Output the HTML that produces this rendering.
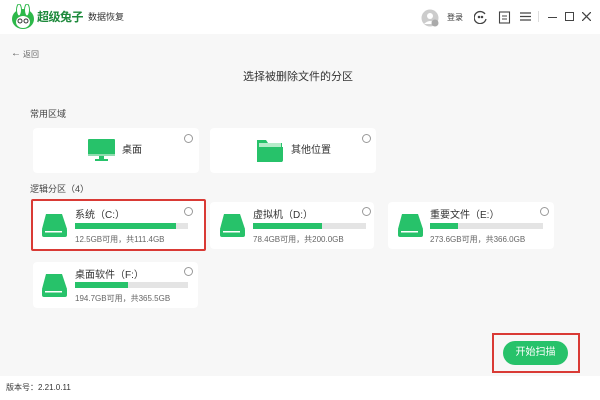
<!DOCTYPE html>
<html><head><meta charset="utf-8"><style>
*{margin:0;padding:0;box-sizing:border-box}
body{width:600px;height:400px;overflow:hidden;background:#fff;font-family:"Liberation Sans","Noto Sans CJK SC",sans-serif;color:#333;position:relative}
.a{position:absolute}
.main{left:0;top:34px;width:600px;height:342px;background:#f7f7f7}
.card{position:absolute;background:#fff;border-radius:4px}
.radio{position:absolute;width:9px;height:9px;border:1px solid #999;border-radius:50%}
.t{position:absolute;font-size:10px;white-space:nowrap;line-height:1}
.bar{position:absolute;height:6px;background:#e4e4e4}
.bar i{display:block;height:100%;background:#27c26a}
.s{position:absolute;font-size:8px;color:#666;white-space:nowrap;line-height:1}
</style></head><body>
<svg class="a" style="left:11px;top:4px" width="24" height="26" viewBox="0 0 24 26">
<ellipse cx="12" cy="15" rx="11" ry="10" fill="#2db84a"/>
<ellipse cx="8" cy="6" rx="2.5" ry="6" fill="#fff" stroke="#2db84a"/>
<ellipse cx="16" cy="6" rx="2.5" ry="6" fill="#fff" stroke="#2db84a"/>
<ellipse cx="12" cy="18" rx="7" ry="6" fill="#fff"/>
<circle cx="9" cy="17" r="2" fill="none" stroke="#333"/><circle cx="15" cy="17" r="2" fill="none" stroke="#333"/>
</svg>
<div class="t" style="left:37px;top:11px;font-size:12px;font-weight:bold;color:#1e8a3c;letter-spacing:-0.5px">超级兔子</div>
<div class="t" style="left:88px;top:13px;font-size:9px;color:#333">数据恢复</div>
<svg class="a" style="left:421px;top:9px" width="18" height="18"><circle cx="9" cy="9" r="8.5" fill="#ccc"/><circle cx="9" cy="7" r="3" fill="#fff"/><path d="M3 15 Q9 9 15 15" fill="#fff"/><circle cx="14" cy="14" r="3.5" fill="#aaa"/></svg>
<div class="t" style="left:447px;top:14px;font-size:8px">登录</div>
<svg class="a" style="left:474px;top:10px" width="14" height="14" fill="none" stroke="#444" stroke-width="1.3"><path d="M11 4 A6 6 0 1 0 12 9"/><circle cx="5" cy="7" r=".6" fill="#444"/><circle cx="8" cy="7" r=".6" fill="#444"/></svg>
<svg class="a" style="left:498px;top:10px" width="13" height="14" fill="none" stroke="#444" stroke-width="1.1"><rect x="1.5" y="2" width="10" height="11"/><path d="M4 6h5M4 9h5"/></svg>
<svg class="a" style="left:520px;top:11px" width="11" height="11" stroke="#444" stroke-width="1.2"><path d="M0 2h11M0 5.5h11M0 9h11"/></svg>
<div class="a" style="left:538px;top:11px;width:1px;height:11px;background:#ddd"></div>
<div class="a" style="left:548px;top:17px;width:9px;height:1.3px;background:#444"></div>
<div class="a" style="left:565px;top:12px;width:9px;height:9px;border:1.3px solid #444"></div>
<svg class="a" style="left:582px;top:12px" width="9" height="9" stroke="#444" stroke-width="1.3"><path d="M0 0L9 9M9 0L0 9"/></svg>
<div class="a main"></div>
<div class="t" style="left:11px;top:49px;font-size:10px;color:#555">←</div>
<div class="t" style="left:23px;top:51px;font-size:8px;color:#666">返回</div>
<div class="t" style="left:243px;top:72px;font-size:11px">选择被删除文件的分区</div>
<div class="t" style="left:30px;top:110px;font-size:9px;color:#444">常用区域</div>
<div class="card" style="left:33px;top:128px;width:166px;height:45px"></div>
<div class="radio" style="left:184px;top:134px"></div>
<svg class="a" style="left:88px;top:139px" width="28" height="24"><rect x="0" y="0" width="27" height="17" rx="1" fill="#27c26a"/><rect x="0" y="15" width="27" height="2" fill="#8fdcaf"/><rect x="11" y="17" width="5" height="4" fill="#27c26a"/><rect x="7" y="20" width="13" height="2" fill="#27c26a"/></svg>
<div class="t" style="left:122px;top:146px">桌面</div>
<div class="card" style="left:210px;top:128px;width:166px;height:45px"></div>
<div class="radio" style="left:362px;top:134px"></div>
<svg class="a" style="left:256px;top:138px" width="28" height="25"><path d="M1 2h9l2 3h14v19H1z" fill="#27c26a"/><rect x="3" y="5" width="22" height="4" fill="#b5ecc9"/><path d="M1 9h26v13a2 2 0 0 1-2 2H3a2 2 0 0 1-2-2z" fill="#27c26a"/></svg>
<div class="t" style="left:291px;top:146px">其他位置</div>
<div class="t" style="left:30px;top:185px;font-size:9px;color:#444">逻辑分区（4）</div>

<div class="card" style="left:33px;top:201px;width:172px;height:48px"></div>
<div class="a" style="left:31px;top:199px;width:175px;height:52px;border:2px solid #d93a35;border-radius:2px"></div>
<div class="radio" style="left:184px;top:207px"></div>
<svg class="a" style="left:42px;top:214px" width="26" height="24"><path d="M4 0h16l5 15H0z" fill="#27c26a"/><rect x="0" y="14" width="25" height="9" rx="2" fill="#27c26a"/><rect x="3" y="17" width="17" height="1.5" fill="#fff"/></svg>
<div class="t" style="left:75px;top:211px">系统（C:）</div>
<div class="bar" style="left:75px;top:223px;width:113px"><i style="width:89%"></i></div>
<div class="s" style="left:75px;top:236px">12.5GB可用，共111.4GB</div>

<div class="card" style="left:210px;top:202px;width:164px;height:47px"></div>
<div class="radio" style="left:362px;top:207px"></div>
<svg class="a" style="left:220px;top:214px" width="26" height="24"><path d="M4 0h16l5 15H0z" fill="#27c26a"/><rect x="0" y="14" width="25" height="9" rx="2" fill="#27c26a"/><rect x="3" y="17" width="17" height="1.5" fill="#fff"/></svg>
<div class="t" style="left:253px;top:211px">虚拟机（D:）</div>
<div class="bar" style="left:253px;top:223px;width:113px"><i style="width:61%"></i></div>
<div class="s" style="left:253px;top:236px">78.4GB可用，共200.0GB</div>

<div class="card" style="left:388px;top:202px;width:166px;height:47px"></div>
<div class="radio" style="left:540px;top:207px"></div>
<svg class="a" style="left:398px;top:214px" width="26" height="24"><path d="M4 0h16l5 15H0z" fill="#27c26a"/><rect x="0" y="14" width="25" height="9" rx="2" fill="#27c26a"/><rect x="3" y="17" width="17" height="1.5" fill="#fff"/></svg>
<div class="t" style="left:430px;top:211px">重要文件（E:）</div>
<div class="bar" style="left:430px;top:223px;width:113px"><i style="width:25%"></i></div>
<div class="s" style="left:430px;top:236px">273.6GB可用，共366.0GB</div>

<div class="card" style="left:33px;top:262px;width:165px;height:46px"></div>
<div class="radio" style="left:184px;top:267px"></div>
<svg class="a" style="left:42px;top:274px" width="26" height="24"><path d="M4 0h16l5 15H0z" fill="#27c26a"/><rect x="0" y="14" width="25" height="9" rx="2" fill="#27c26a"/><rect x="3" y="17" width="17" height="1.5" fill="#fff"/></svg>
<div class="t" style="left:75px;top:271px">桌面软件（F:）</div>
<div class="bar" style="left:75px;top:282px;width:113px"><i style="width:47%"></i></div>
<div class="s" style="left:75px;top:295px">194.7GB可用，共365.5GB</div>

<div class="a" style="left:492px;top:333px;width:88px;height:40px;border:2px solid #d93a35"></div>
<div class="a" style="left:503px;top:341px;width:65px;height:24px;border-radius:12px;background:#27c26a;color:#fff;font-size:10px;display:flex;align-items:center;justify-content:center;line-height:1">开始扫描</div>
<div class="t" style="left:6px;top:384px;font-size:8px;color:#333">版本号：2.21.0.11</div>
</body></html>
